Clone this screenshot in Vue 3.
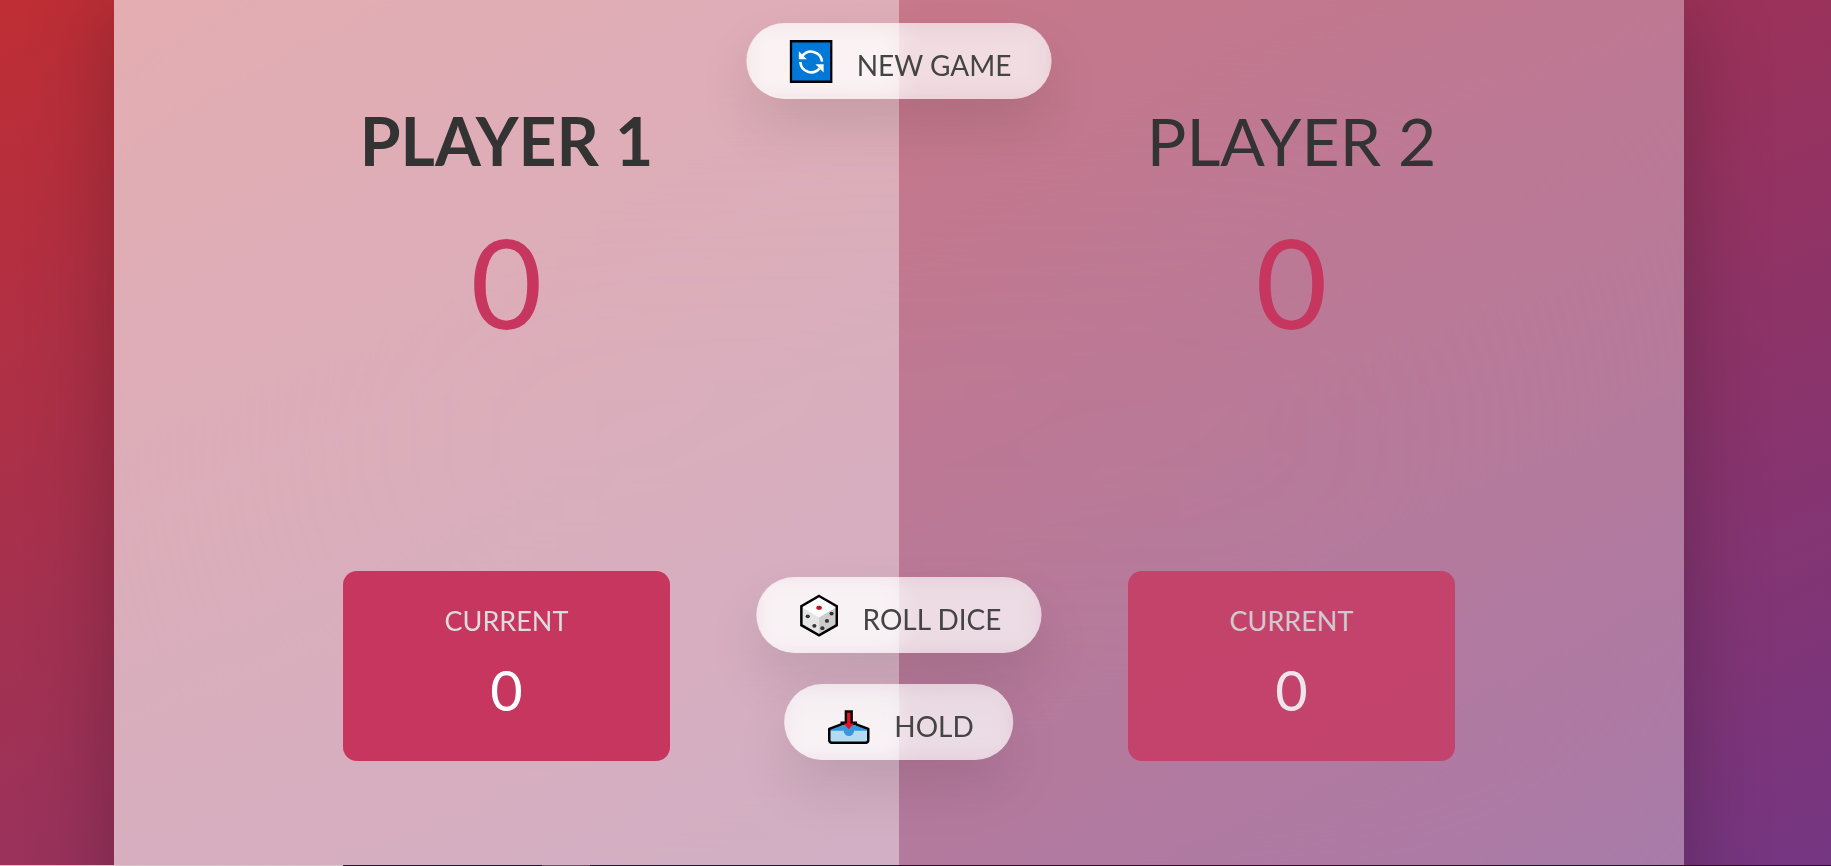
<script setup>
import { ref } from 'vue'

const players = ref([
  { name: 'Player 1', score: 0, current: 0 },
  { name: 'Player 2', score: 0, current: 0 },
])
const active = ref(0)

function switchPlayer() {
  players.value[active.value].current = 0
  active.value = 1 - active.value
}

function newGame() {
  players.value.forEach((p) => {
    p.score = 0
    p.current = 0
  })
  active.value = 0
}

function roll() {
  const dice = Math.floor(Math.random() * 6) + 1
  if (dice === 1) switchPlayer()
  else players.value[active.value].current += dice
}

function hold() {
  const p = players.value[active.value]
  p.score += p.current
  switchPlayer()
}
</script>

<template>
  <div class="page">
    <div class="stage">
      <main class="board">
        <section
          v-for="(p, i) in players"
          :key="p.name"
          class="player"
          :class="{ active: i === active }"
        >
          <h2 class="name">{{ p.name }}</h2>
          <p class="score">{{ p.score }}</p>
          <div class="current">
            <p class="current-label">Current</p>
            <p class="current-score">{{ p.current }}</p>
          </div>
        </section>

        <button class="btn btn-new" type="button" @click="newGame">
          <svg class="icon" viewBox="0 0 43 43" aria-hidden="true">
            <rect x="1.25" y="1.25" width="40.5" height="40.5" fill="#0078d7" stroke="#000" stroke-width="2.5" />
            <g fill="none" stroke="#fff" stroke-width="2.6">
              <path d="M13 15.6A11 11 0 0 1 32.4 21.6" />
              <path d="M10.7 22A11 11 0 0 0 30 28.4" />
            </g>
            <path d="M9.2 11.2V19.3H17.3Z" fill="#fff" />
            <path d="M34 32.4V24.2H25.8Z" fill="#fff" />
          </svg>
          <span class="btn-text">New game</span>
        </button>

        <button class="btn btn-roll" type="button" @click="roll">
          <svg class="icon icon-dice" viewBox="2 0 39 43" aria-hidden="true">
            <path d="M21.5 1.5L40 12V31.5L21.5 42L3 31.5V12Z" fill="#fff" />
            <path d="M4 13L21.5 23.5V41L4 31Z" fill="#e4e4e4" />
            <path d="M39 13L21.5 23.5V41L39 31Z" fill="#ccc" />
            <path d="M21.5 2L39.2 12.2V31.2L21.5 41.4L3.8 31.2V12.2Z" fill="none" stroke="#000" stroke-width="2.5" />
            <ellipse cx="21.5" cy="13.8" rx="2.8" ry="2" fill="#c50f1f" />
            <g fill="#333">
              <ellipse cx="10.2" cy="22.3" rx="2.1" ry="1.9" />
              <ellipse cx="16.8" cy="31.8" rx="2.1" ry="1.9" />
              <ellipse cx="34" cy="19.6" rx="2.1" ry="1.9" />
              <ellipse cx="29.4" cy="26.9" rx="2.1" ry="1.9" />
              <ellipse cx="24.8" cy="34.2" rx="2.1" ry="1.9" />
            </g>
          </svg>
          <span class="btn-text">Roll dice</span>
        </button>

        <button class="btn btn-hold" type="button" @click="hold">
          <svg class="icon" viewBox="0 0 43 43" aria-hidden="true">
            <g transform="translate(0 4.5)">
              <path d="M12 19H31L41.7 23.7V35.5L39.6 38H3.4L1.2 35.5V23.7Z" fill="#3a96dd" />
              <path d="M2.2 25.2H16.4A5.2 5.2 0 0 0 26.8 25.2H40.8V35.3Q40.8 37.2 38.8 37.2H4.2Q2.2 37.2 2.2 35.3Z" fill="#b3dbf2" />
              <path d="M14 18.9L2 23.4V34.5Q2 37.3 4.8 37.3H38.2Q41 37.3 41 34.5V23.4L29 18.9" fill="none" stroke="#000" stroke-width="2.5" stroke-linejoin="round" />
              <path d="M17.4 4.8H25.6V16H29.8V19.5H13.2V16H17.4Z" fill="#000" />
              <path d="M19.8 7.2H23.2V18H26.8L21.5 23.8L16.2 18H19.8Z" fill="#e81123" />
            </g>
          </svg>
          <span class="btn-text">Hold</span>
        </button>
      </main>
    </div>
    <div class="edge"></div>
  </div>
</template>

<style>
body {
  margin: 0;
}
</style>

<style scoped>
.page {
  display: flex;
  flex-direction: column;
  height: 100vh;
  font-family: Lato, "Open Sans", sans-serif;
  color: #333;
}

.stage {
  flex: 1;
  min-height: 0;
  overflow: hidden;
  padding: 0 147px 0 114px;
  background: linear-gradient(to top left, #753682 0%, #bf2e34 100%);
}

.board {
  position: relative;
  display: flex;
  min-height: 942px;
  margin-top: -40px;
  background: rgba(255, 255, 255, 0.35);
  backdrop-filter: blur(200px);
  box-shadow: 0 48px 80px rgba(0, 0, 0, 0.25);
}

.player {
  flex: 1;
  display: flex;
  flex-direction: column;
  align-items: center;
  padding: 141px;
}

.player.active {
  background: rgba(255, 255, 255, 0.4);
}

.name {
  margin: 0 0 20px;
  font-size: 66px;
  line-height: 80px;
  font-weight: 400;
  text-transform: uppercase;
  white-space: nowrap;
}

.active .name {
  font-weight: 700;
}

.score {
  margin: 0 0 auto;
  font-size: 124px;
  line-height: 160px;
  font-weight: 400;
  color: #c7365f;
}

.current {
  box-sizing: border-box;
  width: 65%;
  padding: 32px;
  border-radius: 14px;
  background: #c7365f;
  color: #fff;
  text-align: center;
  opacity: 0.8;
}

.active .current {
  opacity: 1;
}

.current-label {
  margin: 0 0 13px;
  font-size: 27px;
  line-height: 35px;
  text-transform: uppercase;
  color: #ddd;
}

.current-score {
  margin: 0;
  font-size: 56px;
  line-height: 78px;
}

.btn {
  position: absolute;
  left: 50%;
  transform: translateX(-50%);
  display: flex;
  align-items: center;
  gap: 24px;
  height: 76px;
  padding: 0 40px 0 43px;
  border: 0;
  border-radius: 38px;
  background: rgba(255, 255, 255, 0.6);
  backdrop-filter: blur(10px);
  box-shadow: 0 28px 55px rgba(0, 0, 0, 0.1);
  font-family: inherit;
  font-size: 28px;
  line-height: 38px;
  font-weight: 400;
  color: #444;
  text-transform: uppercase;
  white-space: nowrap;
  cursor: pointer;
}

.btn-new {
  top: 63px;
}

.btn-roll {
  top: 617px;
}

.btn-hold {
  top: 724px;
}

.icon {
  width: 43px;
  height: 43px;
}

.icon-dice {
  width: 39px;
}

.btn-text {
  padding-top: 8px;
}

.edge {
  height: 1px;
  background: linear-gradient(
    to right,
    #ccc 343px,
    #20162a 343px 542px,
    #6a5060 542px 590px,
    #20162a 590px
  );
}
</style>
